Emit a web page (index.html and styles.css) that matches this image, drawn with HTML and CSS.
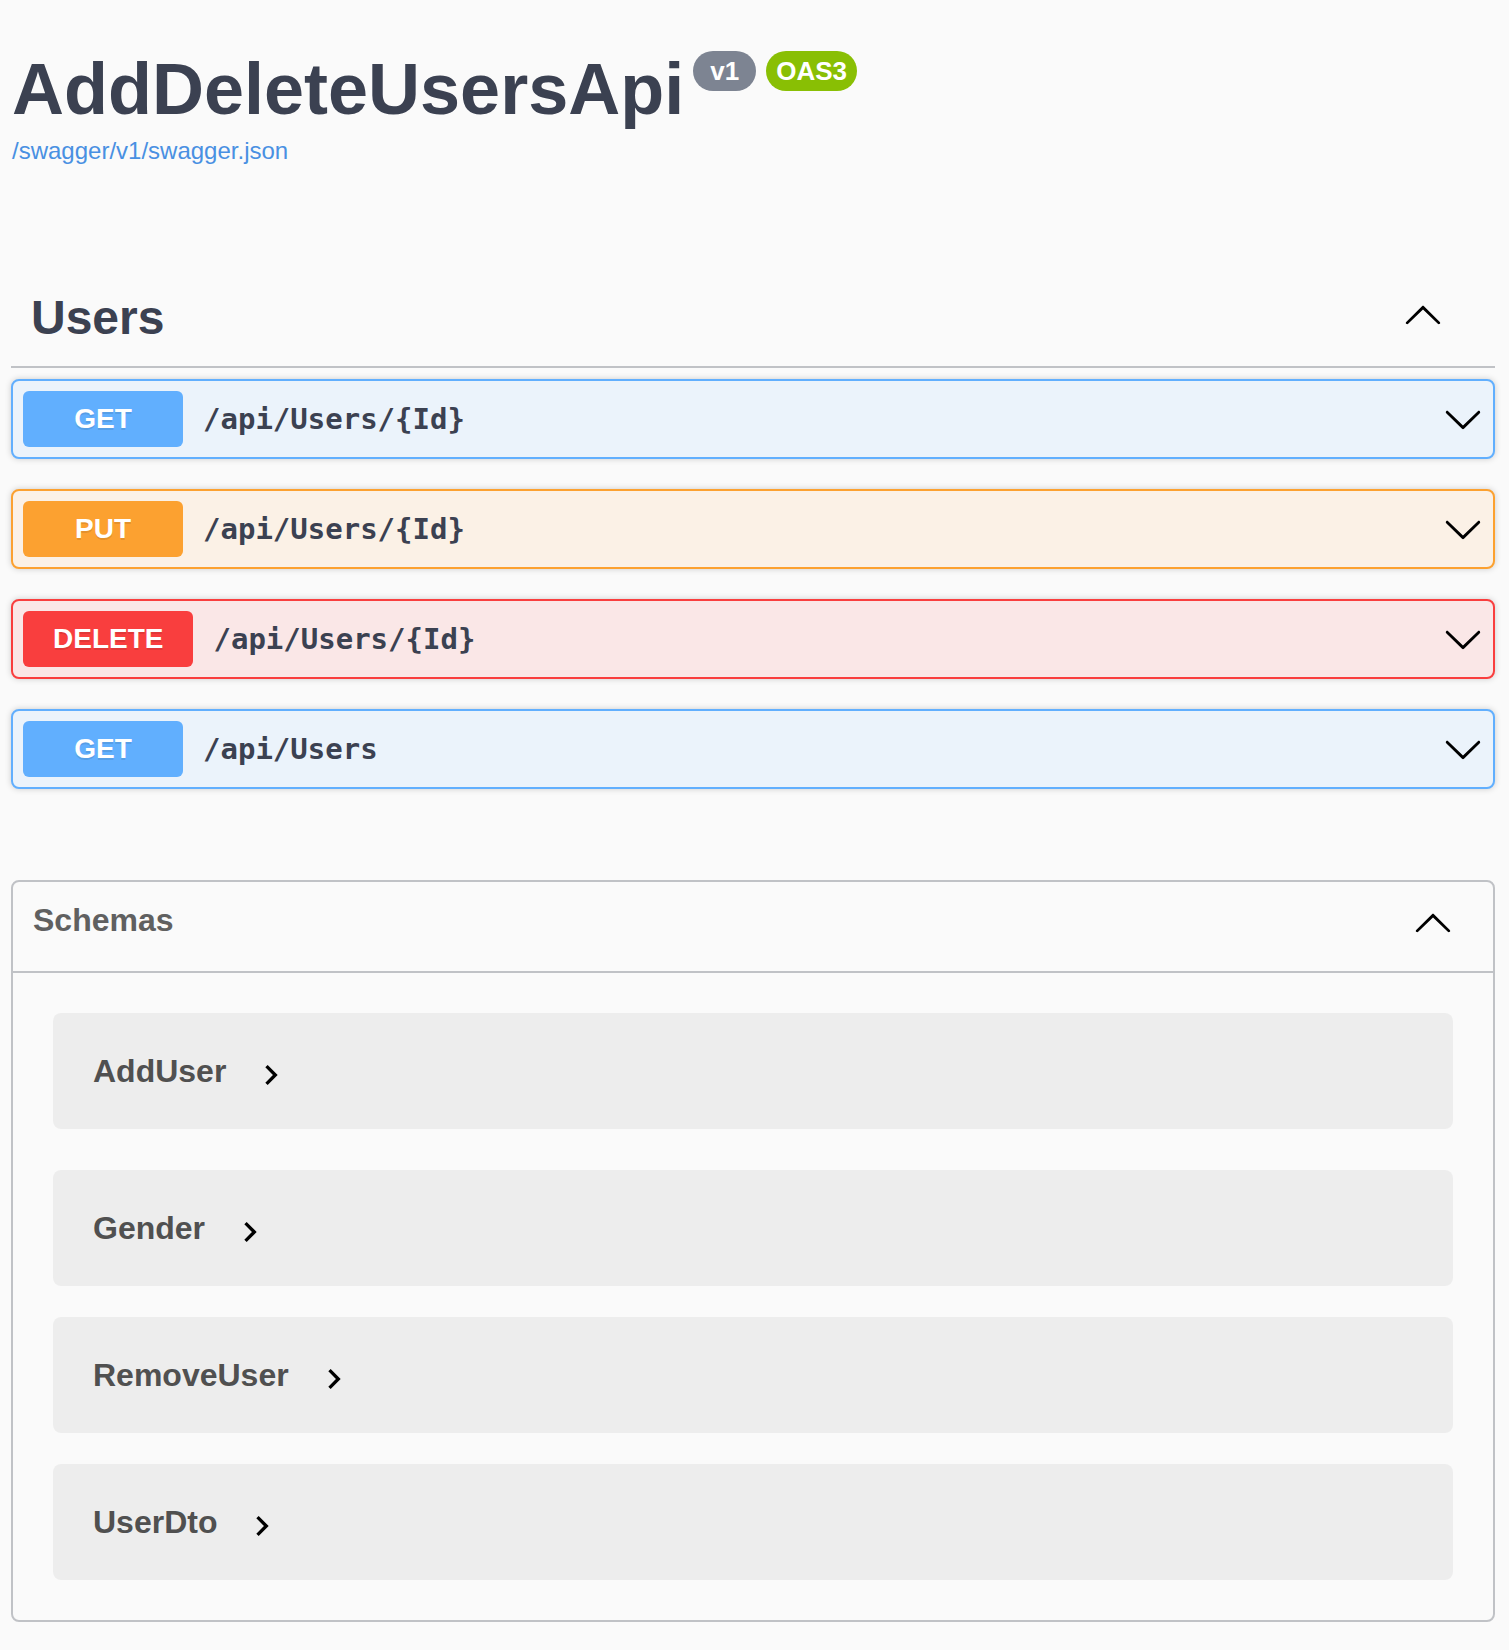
FILE: index.html
```html
<!DOCTYPE html>
<html lang="en">
<head>
<meta charset="utf-8">
<title>AddDeleteUsersApi - Swagger UI</title>
<link rel="stylesheet" href="styles.css">
</head>
<body>
<div class="wrapper">
  <div class="info">
    <div class="title-row">
      <h2 class="title">AddDeleteUsersApi</h2>
      <span class="badge badge-version">v1</span>
      <span class="badge badge-oas">OAS3</span>
    </div>
    <a class="spec-link" href="#">/swagger/v1/swagger.json</a>
  </div>

  <section class="tag-section">
    <h3 class="tag">
      <span class="tag-name">Users</span>
      <svg class="tag-arrow" viewBox="0 0 20 20" width="40" height="40" aria-hidden="true"><path d="M 17.418 14.908 C 17.69 15.176 18.127 15.176 18.397 14.908 C 18.667 14.64 18.668 14.207 18.397 13.939 L 10.489 6.109 C 10.219 5.841 9.782 5.841 9.51 6.109 L 1.602 13.939 C 1.332 14.207 1.332 14.64 1.602 14.908 C 1.873 15.176 2.311 15.176 2.581 14.908 L 10 7.767 L 17.418 14.908 Z"/></svg>
    </h3>
    <div class="ops">
      <div class="opblock opblock-get">
        <div class="summary">
          <span class="method">GET</span>
          <span class="path">/api/Users/{Id}</span>
          <svg class="op-arrow" viewBox="0 0 20 20" width="40" height="40" aria-hidden="true"><path d="M17.418 6.109c.272-.268.709-.268.979 0s.271.701 0 .969l-7.908 7.83c-.27.268-.707.268-.979 0l-7.908-7.83c-.27-.268-.27-.701 0-.969.271-.268.709-.268.979 0L10 13.25l7.418-7.141z"/></svg>
        </div>
      </div>
      <div class="opblock opblock-put">
        <div class="summary">
          <span class="method">PUT</span>
          <span class="path">/api/Users/{Id}</span>
          <svg class="op-arrow" viewBox="0 0 20 20" width="40" height="40" aria-hidden="true"><path d="M17.418 6.109c.272-.268.709-.268.979 0s.271.701 0 .969l-7.908 7.83c-.27.268-.707.268-.979 0l-7.908-7.83c-.27-.268-.27-.701 0-.969.271-.268.709-.268.979 0L10 13.25l7.418-7.141z"/></svg>
        </div>
      </div>
      <div class="opblock opblock-delete">
        <div class="summary">
          <span class="method">DELETE</span>
          <span class="path">/api/Users/{Id}</span>
          <svg class="op-arrow" viewBox="0 0 20 20" width="40" height="40" aria-hidden="true"><path d="M17.418 6.109c.272-.268.709-.268.979 0s.271.701 0 .969l-7.908 7.83c-.27.268-.707.268-.979 0l-7.908-7.83c-.27-.268-.27-.701 0-.969.271-.268.709-.268.979 0L10 13.25l7.418-7.141z"/></svg>
        </div>
      </div>
      <div class="opblock opblock-get">
        <div class="summary">
          <span class="method">GET</span>
          <span class="path">/api/Users</span>
          <svg class="op-arrow" viewBox="0 0 20 20" width="40" height="40" aria-hidden="true"><path d="M17.418 6.109c.272-.268.709-.268.979 0s.271.701 0 .969l-7.908 7.83c-.27.268-.707.268-.979 0l-7.908-7.83c-.27-.268-.27-.701 0-.969.271-.268.709-.268.979 0L10 13.25l7.418-7.141z"/></svg>
        </div>
      </div>
    </div>
  </section>

  <section class="models">
    <h4 class="models-head">
      <span class="models-title">Schemas</span>
      <svg class="models-arrow" viewBox="0 0 20 20" width="40" height="40" aria-hidden="true"><path d="M 17.418 14.908 C 17.69 15.176 18.127 15.176 18.397 14.908 C 18.667 14.64 18.668 14.207 18.397 13.939 L 10.489 6.109 C 10.219 5.841 9.782 5.841 9.51 6.109 L 1.602 13.939 C 1.332 14.207 1.332 14.64 1.602 14.908 C 1.873 15.176 2.311 15.176 2.581 14.908 L 10 7.767 L 17.418 14.908 Z"/></svg>
    </h4>
    <div class="model-list">
      <div class="model-box">
        <span class="model-title">AddUser</span>
        <svg class="model-toggle" viewBox="0 0 24 24" width="40" height="40" aria-hidden="true"><path d="M10 6 8.59 7.41 13.17 12l-4.58 4.59L10 18l6-6z"/></svg>
      </div>
      <div class="model-box">
        <span class="model-title">Gender</span>
        <svg class="model-toggle" viewBox="0 0 24 24" width="40" height="40" aria-hidden="true"><path d="M10 6 8.59 7.41 13.17 12l-4.58 4.59L10 18l6-6z"/></svg>
      </div>
      <div class="model-box">
        <span class="model-title">RemoveUser</span>
        <svg class="model-toggle" viewBox="0 0 24 24" width="40" height="40" aria-hidden="true"><path d="M10 6 8.59 7.41 13.17 12l-4.58 4.59L10 18l6-6z"/></svg>
      </div>
      <div class="model-box">
        <span class="model-title">UserDto</span>
        <svg class="model-toggle" viewBox="0 0 24 24" width="40" height="40" aria-hidden="true"><path d="M10 6 8.59 7.41 13.17 12l-4.58 4.59L10 18l6-6z"/></svg>
      </div>
    </div>
  </section>
</div>
</body>
</html>
```

FILE: styles.css
```css
* {
  box-sizing: border-box;
}

html, body {
  margin: 0;
  padding: 0;
  background: #fafafa;
}

body {
  font-family: "Liberation Sans", Arial, sans-serif;
  color: #3b4151;
}

.wrapper {
  padding: 51px 14px 0 11px;
}

/* ---------- info ---------- */
.info {
  padding-left: 1px;
}

.title-row {
  display: flex;
  align-items: flex-start;
}

.title {
  margin: 2px 0 0 0;
  font-size: 72px;
  line-height: 72px;
  font-weight: 700;
  color: #3b4151;
}

.badge {
  display: inline-flex;
  justify-content: center;
  align-items: center;
  height: 40px;
  min-width: 63px;
  padding: 0 10px;
  border-radius: 40px;
  color: #fff;
  font-size: 26px;
  font-weight: 700;
  line-height: 40px;
  margin-left: 10px;
}

.badge-version {
  background: #7d8492;
  margin-left: 9px;
}

.badge-oas {
  background: #89bf04;
}

.spec-link {
  display: block;
  margin-top: 12px;
  font-size: 24px;
  line-height: 28px;
  color: #4990e2;
  text-decoration: none;
}

/* ---------- tag ---------- */
.tag-section {
  margin-top: 105px;
}

.tag {
  display: flex;
  align-items: flex-start;
  margin: 0;
  padding: 20px 52px 20px 20px;
  border-bottom: 2px solid rgba(59, 65, 81, 0.3);
  font-size: 48px;
  line-height: 56px;
  font-weight: 700;
  color: #3b4151;
}

.tag-name {
  flex: 1;
}

.tag-arrow {
  margin-top: 4px;
  fill: #000;
  flex: none;
}

.ops {
  display: flex;
  flex-direction: column;
  gap: 30px;
  margin-top: 11px;
}

.opblock {
  border: 2px solid #61affe;
  border-radius: 8px;
  box-shadow: 0 0 6px rgba(0, 0, 0, 0.19);
}

.opblock-get {
  background: #ebf3fb;
  border-color: #61affe;
}

.opblock-put {
  background: #fbf1e6;
  border-color: #fca130;
}

.opblock-delete {
  background: #fae7e7;
  border-color: #f93e3e;
}

.summary {
  display: flex;
  align-items: center;
  padding: 10px;
}

.method {
  min-width: 160px;
  padding: 12px 30px;
  border-radius: 6px;
  font-size: 28px;
  line-height: 32px;
  font-weight: 700;
  text-align: center;
  color: #fff;
  text-shadow: 0 2px 0 rgba(0, 0, 0, 0.1);
}

.opblock-get .method {
  background: #61affe;
}

.opblock-put .method {
  background: #fca130;
}

.opblock-delete .method {
  background: #f93e3e;
}

.path {
  flex: 1;
  padding: 0 20px;
  font-family: "DejaVu Sans Mono", "Liberation Mono", monospace;
  font-size: 29px;
  font-weight: 700;
  color: #3b4151;
}

.op-arrow {
  flex: none;
  fill: #000;
}

/* ---------- models ---------- */
.models {
  margin-top: 91px;
  border: 2px solid rgba(59, 65, 81, 0.3);
  border-radius: 8px;
}

.models-head {
  display: flex;
  align-items: flex-start;
  margin: 0;
  padding: 20px 40px 29px 20px;
  border-bottom: 2px solid rgba(59, 65, 81, 0.3);
  font-size: 32px;
  line-height: 37px;
  font-weight: 700;
  color: #606060;
}

.models-title {
  flex: 1;
}

.models-arrow {
  flex: none;
  fill: #000;
}

.model-list {
  display: flex;
  flex-direction: column;
  gap: 31px;
  padding: 40px;
}

.model-box {
  display: flex;
  align-items: flex-start;
  padding: 40px;
  border-radius: 8px;
  background: rgba(0, 0, 0, 0.05);
}

.model-box:first-child {
  margin-bottom: 10px;
}

.model-title {
  font-size: 32px;
  line-height: 36px;
  font-weight: 700;
  color: #505050;
}

.model-toggle {
  flex: none;
  margin: 2px 0 -6px 25px;
  fill: #000;
}
```
